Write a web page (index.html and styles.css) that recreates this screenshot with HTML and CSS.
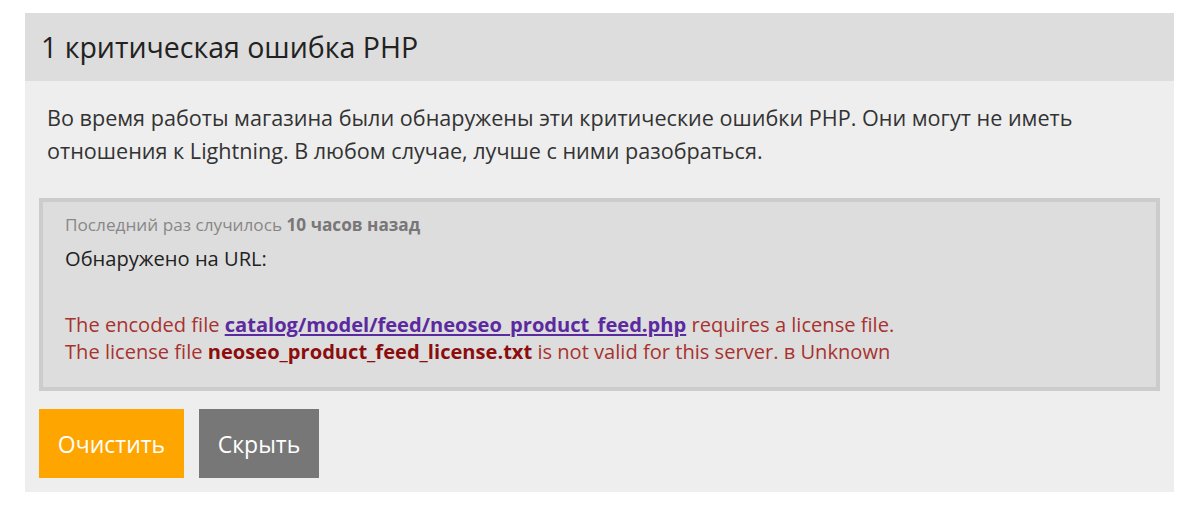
FILE: index.html
```html
<!DOCTYPE html>
<html lang="ru">
<head>
    <meta charset="UTF-8">
    <meta name="viewport" content="width=device-width, initial-scale=1.0">
    <title>Ошибки PHP</title>
    <link rel="stylesheet" href="styles.css">
</head>
<body>
    <div class="panel">
        <div class="panel-head">1 критическая ошибка PHP</div>
        <div class="panel-body">
            <p class="intro">Во время работы магазина были обнаружены эти критические ошибки PHP. Они могут не иметь отношения к Lightning. В любом случае, лучше с ними разобраться.</p>
            <div class="error-box">
                <div class="when">Последний раз случилось <b>10 часов назад</b></div>
                <div class="where">Обнаружено на URL:</div>
                <div class="message">
                    The encoded file <a href="#">catalog/model/feed/neoseo_product_feed.php</a> requires a license file.<br>
                    The license file <b>neoseo_product_feed_license.txt</b> is not valid for this server. в Unknown
                </div>
            </div>
            <div class="actions">
                <button class="btn btn-clear">Очистить</button>
                <button class="btn btn-hide">Скрыть</button>
            </div>
        </div>
    </div>
</body>
</html>
```

FILE: styles.css
```css
*{
    margin:0;
    padding:0;
    box-sizing:border-box;
}
body{
    background-color:#fff;
    font-family:"Open Sans", "Noto Sans", sans-serif;
    color:#333;
}
.panel{
    width:1149px;
    margin:13px 0 0 25px;
    background-color:#eee;
}
.panel-head{
    background-color:#ddd;
    height:68px;
    line-height:68px;
    padding:0 16px;
    font-size:28.5px;
    color:#222;
}
.panel-body{
    padding:20px 14px 14px;
}
.intro{
    font-size:21.6px;
    line-height:33px;
    padding:0 8px;
    color:#333;
}
.error-box{
    margin-top:31px;
    height:193px;
    border:4px solid #ccc;
    background-color:#ddd;
    padding:11px 22px 0;
}
.when{
    font-size:17.2px;
    line-height:24px;
    color:#888;
}
.when b{
    color:#777;
}
.where{
    margin-top:9px;
    font-size:20.1px;
    line-height:26px;
    color:#222;
}
.message{
    margin-top:39px;
    font-size:20.1px;
    line-height:27px;
    color:#a8322f;
}
.message a{
    color:#5b2a9f;
    font-weight:bold;
}
.message b{
    color:#8b0d0d;
}
.actions{
    display:flex;
    gap:15px;
    margin-top:18px;
}
.btn{
    height:69px;
    padding:0 18px;
    border:none;
    font-family:"Open Sans", "Noto Sans", sans-serif;
    font-size:23px;
    color:#fff;
    cursor:pointer;
}
.btn-clear{
    width:145px;
    background-color:#ffa500;
}
.btn-hide{
    width:120px;
    background-color:#777;
}
```
